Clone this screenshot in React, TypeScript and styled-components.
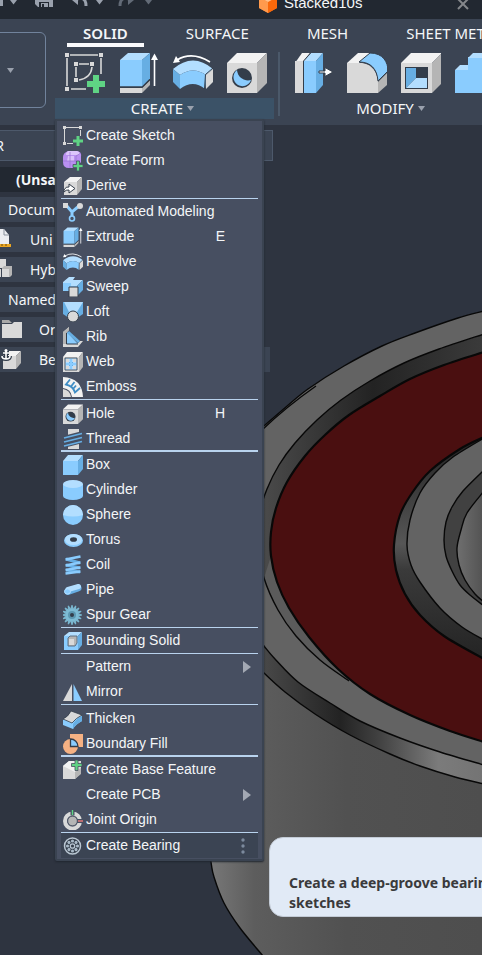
import React from "react";
import styled, { createGlobalStyle } from "styled-components";

const ui = '"Noto Sans", "Open Sans", sans-serif';
const sans = '"Liberation Sans", Arial, sans-serif';

const c = {
  title: "#222831",
  ribbon: "#3b4453",
  canvas: "#2e3440",
  menu: "#474f61",
  edge: "#3a4351",
  line: "#b9d3ee",
  text: "#f4f6f8",
  muted: "#9aa1ad",
  blue: "#8accfe",
  pale: "#b3deff",
  deep: "#67aee3",
  grey: "#d9d9d9",
  white: "#f2f2f2",
  shade: "#b5b5b5",
  ink: "#333d4a",
  green: "#5fd384",
};

const GlobalStyle = createGlobalStyle`
  * { box-sizing: border-box; }
  body { margin: 0; background: ${c.canvas}; }
  button { border: 0; padding: 0; margin: 0; background: none; color: inherit; font: inherit; cursor: pointer; }
  svg { display: block; flex: none; }
`;

const Page = styled.div`
  min-height: 100vh;
  display: flex;
  flex-direction: column;
  overflow: hidden;
  position: relative;
  background: ${c.canvas};
  color: ${c.text};
  font-family: ${ui};
`;

const TitleBar = styled.header`
  height: 19px;
  display: flex;
  align-items: flex-end;
  justify-content: space-between;
  overflow: hidden;
  background: ${c.title};
  padding: 0 13px 6px 0;
`;
const QuickAccess = styled.div`
  flex: 0 0 259px;
  display: flex;
  height: 24px;
`;
const DocTab = styled.div`
  flex: 1;
  display: flex;
  align-items: center;
  gap: 7px;
  height: 21px;
  font: 15px/21px ${sans};
`;
const CloseButton = styled.button`
  height: 18px;
  color: ${c.muted};
`;

const Ribbon = styled.div`
  height: 106px;
  display: flex;
  background: ${c.ribbon};
  position: relative;
  z-index: 2;
`;
const WorkspaceButton = styled.button`
  flex: none;
  width: 66px;
  height: 76px;
  margin: 13px 9px 0 -20px;
  padding: 0 31px 0 0;
  border: 1px solid #71839c;
  border-radius: 6px;
  display: flex;
  align-items: center;
  justify-content: flex-end;
`;
const RibbonMain = styled.div`
  flex: none;
`;
const Tabs = styled.nav`
  height: 28px;
  display: flex;
  gap: 26px;
  padding-left: 12px;
  margin-bottom: 5px;
`;
const Tab = styled.button<{ $active?: boolean }>`
  height: 28px;
  min-width: 72px;
  padding: 4px 16px 0;
  font-size: 15px;
  line-height: 20px;
  font-weight: ${(p) => (p.$active ? 600 : 400)};
  border-bottom: 4px solid ${(p) => (p.$active ? "#fbfbfd" : "transparent")};
  white-space: nowrap;
`;
const Groups = styled.div`
  display: flex;
`;
const Group = styled.section`
  position: relative;
  width: 219px;
`;
const Tools = styled.div`
  display: flex;
  gap: 14px;
  padding: 0 7px 5px 10px;
  height: 46px;
`;
const GroupLabel = styled.button<{ $open?: boolean }>`
  width: 100%;
  height: 21px;
  display: flex;
  align-items: center;
  justify-content: center;
  gap: 4px;
  padding-right: 4px;
  font-size: 15px;
  line-height: 21px;
  background: ${(p) => (p.$open ? "#3b5267" : "transparent")};
`;
const Divider = styled.div`
  width: 2px;
  height: 64px;
  margin: 0 3px 0 4px;
  background: #4b596a;
`;

const Menu = styled.div`
  position: absolute;
  top: 100%;
  left: 0;
  width: 209px;
  padding: 2px 4px 1px;
  background: ${c.menu};
  border: 2px solid ${c.edge};
  border-radius: 2px;
  box-shadow: 0 1px 2px #20262f;
  font: 14px/25px ${sans};
`;
const MenuItem = styled.button<{ $hot?: boolean }>`
  width: 100%;
  height: 25px;
  display: grid;
  grid-template-columns: 20px 1fr 16px 20px;
  column-gap: 3px;
  align-items: center;
  padding: 0 4px 0 2px;
  text-align: left;
  white-space: nowrap;
  background: ${(p) => (p.$hot ? c.ribbon : "transparent")};
`;
const ItemLabel = styled.span`
  grid-column: 2;
`;
const Shortcut = styled.span`
  grid-column: 3;
  justify-self: end;
  margin-right: 6px;
`;
const ItemEnd = styled.span`
  grid-column: 4;
  justify-self: end;
  margin-right: 3px;
`;
const Rule = styled.hr<{ $kind: "thin" | "spaced" | "thick" }>`
  border: 0;
  height: ${(p) => (p.$kind === "thick" ? 2 : 1)}px;
  margin: ${(p) => (p.$kind === "thick" ? "-1px 0 0" : p.$kind === "spaced" ? "0 0 1px" : "0")};
  background: ${c.line};
`;
const HotRow = styled.div`
  position: relative;
`;
const Tooltip = styled.div`
  position: absolute;
  left: calc(100% + 11px);
  top: 4px;
  min-width: 260px;
  height: 80px;
  padding: 35px 19px 0;
  border: 1px solid #c3cbd6;
  border-radius: 14px;
  background: #e1eaf6;
  color: #3a3a3c;
  font: 700 14px/20px ${ui};
  white-space: nowrap;
`;

const Workspace = styled.main`
  flex: 1;
  position: relative;
`;
const Viewport = styled.svg`
  position: absolute;
  inset: 0;
  width: 100%;
  height: 100%;
`;
const Browser = styled.aside`
  position: relative;
  width: 273px;
  padding-top: 5px;
  font-size: 14px;
`;
const BrowserHead = styled.div`
  height: 31px;
  margin-bottom: 6px;
  padding-right: 268px;
  display: flex;
  align-items: center;
  justify-content: flex-end;
  background: ${c.ribbon};
  border: 1px solid #4d596b;
  border-left: 0;
`;
const Tree = styled.ul`
  list-style: none;
  margin: 0;
  padding: 0;
  display: grid;
  row-gap: 5px;
`;
const Node = styled.li<{ $indent: number; $root?: boolean; $wide?: boolean }>`
  height: 25px;
  width: ${(p) => (p.$wide ? 270 : 260)}px;
  display: flex;
  align-items: center;
  position: relative;
  padding-left: ${(p) => p.$indent}px;
  line-height: 25px;
  font-weight: ${(p) => (p.$root ? 700 : 400)};
  background: ${(p) => (p.$root ? c.title : c.ribbon)};
`;
const NodeIcon = styled.span`
  position: absolute;
  left: 0;
  top: 2px;
`;

/* ---------- drawings ---------- */

const Caret = ({ color = c.muted }: { color?: string }) => (
  <svg width="7" height="5" viewBox="0 0 7 5"><path d="M0 0H7L3.5 5Z" fill={color} /></svg>
);

const art: Record<string, React.ReactNode> = {
  sketch: (
    <>
      <path d="M5 3H33M2 6V34M36 6V22M6 37H21M14 12H24M11 15V25M27 15Q26 26 14 28" stroke={c.grey} strokeWidth="1.600" fill="none" />
      <path d="M0 1h4v4h-4zM34 1h4v4h-4zM0 35h4v4h-4zM9 10h4v4h-4zM25 10h4v4h-4zM9 26h4v4h-4z" fill={c.grey} />
      <path d="M28 23h6v6h6v6h-6v6h-6v-6h-6v-6h6z" fill={c.green} />
    </>
  ),
  extrude: (
    <>
      <path d="M1 36H23V41H1Z" fill={c.grey} /><path d="M23 36L31 28V33L23 41Z" fill={c.shade} />
      <path d="M1 8L9 1H31L23 8Z" fill={c.pale} /><path d="M1 8H23V34.500H1Z" fill={c.blue} /><path d="M23 8L31 1V26.500L23 34.500Z" fill={c.deep} />
      <path d="M1 35.200H23.300L31 27.500" stroke={c.ink} strokeWidth="1.300" fill="none" />
      <path d="M35.500 6V34" stroke="#fff" strokeWidth="1.600" /><path d="M32 8L35.500 1.500L39 8Z" fill="#fff" />
    </>
  ),
  revolve: (
    <>
      <path d="M0 17Q20 0 40 17L33 23Q20 14 7 23Z" fill={c.pale} />
      <path d="M0 17L7 23V37L0 30Z" fill={c.deep} /><path d="M7 23Q20 14 33 23L32 37Q20 27 7 37Z" fill={c.blue} />
      <path d="M33 23L40 17V30L33 37Z" fill={c.grey} /><path d="M40 16L32.500 22.500L31.500 37" stroke={c.ink} fill="none" />
      <path d="M37 10Q19 -1 4 8" stroke="#fff" strokeWidth="1.700" fill="none" /><path d="M0 11L3 4L7 10Z" fill="#fff" />
    </>
  ),
  hole: (
    <>
      <path d="M0 11L10 1H40L30 11Z" fill={c.white} /><path d="M0 11H30V41H0Z" fill={c.grey} /><path d="M30 11L40 1V31L30 41Z" fill={c.shade} />
      <circle cx="15" cy="26" r="10" fill={c.ink} /><path d="M10 18A9 9 0 1 0 24 28A11 11 0 0 1 10 18Z" fill={c.blue} />
    </>
  ),
  press: (
    <>
      <path d="M2 11L9 1H17L10 11Z" fill={c.white} /><path d="M2 9H10V41H2Z" fill={c.grey} />
      <path d="M11 9L18 1H30L23 9Z" fill={c.pale} /><path d="M11 9H23V41H11Z" fill={c.blue} /><path d="M23 9L30 1V33L23 41Z" fill={c.deep} />
      <path d="M10.500 41V9L17.500 1" stroke={c.ink} fill="none" />
      <path d="M26 19H32V15.500L40 20L32 24.500V21H26Z" fill="#fff" stroke={c.ink} />
    </>
  ),
  fillet: (
    <>
      <path d="M0 11L11 1H24L12 11Z" fill={c.white} /><path d="M0 11H13C25 11 31 21 31 31V41H0Z" fill={c.grey} />
      <path d="M31 30L41 20V32L31 41Z" fill={c.shade} />
      <path d="M12 10L23 1C36 1 41 10 41 19L31 29C30 17 24 10 12 10Z" fill={c.blue} stroke={c.ink} />
    </>
  ),
  shell: (
    <>
      <path d="M0 11L10 1H41L31 11Z" fill={c.white} /><path d="M0 11H31V41H0Z" fill={c.grey} /><path d="M31 11L41 1V31L31 41Z" fill={c.shade} />
      <path d="M4 15H27V37H4Z" fill={c.ink} /><path d="M5 16H15V26L5 36Z" fill={c.deep} /><path d="M15 26H26V36H5Z" fill={c.pale} />
    </>
  ),
  combine: (
    <>
      <path d="M0 18L5 13H15V18Z" fill={c.pale} /><path d="M0 18H13V5H40V41H0Z" fill={c.blue} /><path d="M13 6L18 1H40V6Z" fill={c.pale} />
    </>
  ),
};

const Big = ({ name }: { name: string }) => (
  <svg width="40" height="41" viewBox="0 0 40 41">{art[name]}</svg>
);

const box = (
  <>
    <path d="M0 6L5 0H20L15 6Z" fill={c.pale} /><path d="M0 6H15V20H0Z" fill={c.blue} /><path d="M15 6L20 0V14L15 20Z" fill={c.deep} />
  </>
);
const greyBox = (
  <>
    <path d="M1 6L7 1H19L14 6Z" fill={c.white} /><path d="M1 6H14V19H1Z" fill={c.grey} /><path d="M14 6L19 1V13L14 19Z" fill={c.shade} />
  </>
);
const half = (name: string) => <g transform="scale(.5 .488)">{art[name]}</g>;
const teeth = Array.from({ length: 16 }, (_, i) => i * 22.5);

const small: Record<string, React.ReactNode> = {
  sketch: (
    <>
      <path d="M3 1.500H16M1.500 3V16M17.500 4V10M4 17.500H10" stroke={c.grey} strokeWidth="1" fill="none" />
      <path d="M0 0h3v3h-3zM16 0h3v3h-3zM0 16h3v3h-3z" fill={c.grey} />
      <path d="M13.500 10h3v3.500h3.500v3h-3.500v3.500h-3v-3.500h-3.500v-3h3.500z" fill={c.green} />
    </>
  ),
  form: (
    <>
      <path d="M5 0H14Q19 1 18 6V11L13 17H6Q0 17 0 11V6Q0 2 5 0Z" fill="#b990f0" />
      <path d="M5 0H14Q18 1 16 4H4Q1 4 5 0Z" fill="#dcc5fb" /><path d="M5 5H11V10H4Z" fill="#d9c0fb" />
      <path d="M0 10H13M7 1V17M13 17V5L18 2" stroke="#9b76d2" strokeWidth=".8" fill="none" />
      <path d="M13.500 10h3v3.500h3.500v3h-3.500v3.500h-3v-3.500h-3.500v-3h3.500z" fill={c.green} stroke={c.menu} strokeWidth=".8" />
    </>
  ),
  derive: (<>{greyBox}<path d="M1 14Q3 10 6 11V8L12 12.500L6 17V14Q3 13.500 1 16Z" fill="#fff" stroke={c.ink} /></>),
  auto: (
    <>
      <path d="M3 3L9 10L16 4M9 10V16" stroke={c.blue} strokeWidth="3" fill="none" />
      <path d="M0 1H5V6H0Z" fill={c.grey} /><circle cx="17" cy="4" r="3" fill={c.grey} /><circle cx="9" cy="16.500" r="2.500" fill={c.menu} stroke={c.blue} strokeWidth="1.600" />
    </>
  ),
  extrude: half("extrude"),
  revolve: half("revolve"),
  hole: half("hole"),
  sweep: (
    <>
      <path d="M0 5L6 0H12L10 3H20L14 9H0Z" fill={c.pale} /><path d="M0 6H8V9H14V14H0Z" fill={c.blue} /><path d="M14 9L20 3V13L15 18Z" fill={c.deep} />
      <path d="M6 10H15V20H6Z" fill={c.grey} stroke={c.ink} />
    </>
  ),
  loft: (
    <>
      <path d="M0 0H20V12L14 16H6L0 12Z" fill={c.deep} /><path d="M1 0H20L14 10H6Z" fill={c.pale} />
      <circle cx="10" cy="14.500" r="5.500" fill={c.grey} stroke={c.ink} />
    </>
  ),
  rib: (
    <>
      <path d="M0 5L6 0V3L3 6V17H14L17 14H20L15 20H0Z" fill={c.grey} /><path d="M0 5L6 0V3L3 6V17H0Z" fill={c.shade} />
      <path d="M4 5L15 17H4Z" fill={c.blue} /><path d="M4 6L6 4L17 14L15 16Z" fill={c.deep} />
      <path d="M3.500 6V17H15" stroke={c.ink} fill="none" />
    </>
  ),
  web: (
    <>
      <path d="M0 5L4 0H20L16 5Z" fill={c.white} /><path d="M0 5H16V20H0Z" fill={c.grey} /><path d="M16 5L20 0V15L16 20Z" fill={c.shade} />
      <path d="M2 6H14V18H2Z" fill={c.pale} stroke={c.ink} strokeWidth=".8" />
      <path d="M3 7h3v3h-3zM10 7h3v3h-3zM3 14h3v3h-3zM10 14h3v3h-3z" fill={c.grey} />
      <path d="M8 7V17M3 12H13" stroke={c.blue} strokeWidth="2" />
      <path d="M6 10h1v1h-1zM9 10h1v1h-1zM6 13h1v1h-1zM9 13h1v1h-1z" fill={c.deep} />
    </>
  ),
  emboss: (
    <>
      <path d="M0 0Q19 1 20 20H9Q8 12 0 11Z" fill={c.white} /><path d="M0 12Q7 13 8 20H0Z" fill={c.grey} />
      <path d="M7 2.500L3 7.500Q10 9 12 15.500L17 11M11.500 5L8 9.500M13 8.500L10.500 11.500" stroke="#3f8dc5" strokeWidth="1.800" fill="none" />
    </>
  ),
  thread: (
    <>
      <path d="M5 0H16V20H5Z" fill={c.grey} />
      <path d="M0 9L20 4M0 13L20 8M0 17L20 12" stroke={c.menu} strokeWidth="4" /><path d="M1 9L19 4.500M1 13L19 8.500M1 17L19 12.500" stroke={c.deep} strokeWidth="1.800" />
    </>
  ),
  box,
  cylinder: (<><path d="M0 4V16A10 4 0 0 0 20 16V4Z" fill={c.blue} /><ellipse cx="10" cy="4" rx="10" ry="4" fill={c.pale} /></>),
  sphere: (<><circle cx="10" cy="10" r="10" fill={c.blue} /><path d="M0 10A10 10 0 0 1 20 10Q10 13 0 10Z" fill={c.pale} /></>),
  torus: (<><ellipse cx="10.500" cy="10.500" rx="9.500" ry="6.500" fill={c.blue} /><ellipse cx="10.500" cy="9.500" rx="8.500" ry="5.500" fill={c.pale} /><ellipse cx="10.500" cy="9.500" rx="3.500" ry="2.300" fill={c.ink} /></>),
  coil: (
    <>
      <path d="M3 4L17 8M3 10L17 13M3 15L17 17" stroke={c.deep} strokeWidth="3" />
      <path d="M2.500 4.500L17.500 1.500M2.500 10.500L17.500 7.500M2.500 15L17.500 12.500M2.500 18.500L17.500 16.500" stroke={c.blue} strokeWidth="2.600" />
    </>
  ),
  pipe: (
    <>
      <path d="M5 11.500L15 8" stroke={c.deep} strokeWidth="7" strokeLinecap="round" /><path d="M5 9.500L15.500 6.500" stroke={c.pale} strokeWidth="5" strokeLinecap="round" />
      <ellipse cx="4.500" cy="11.500" rx="3" ry="2.600" fill={c.blue} stroke={c.pale} />
    </>
  ),
  gear: (
    <>
      {teeth.map((a) => (<path key={a} d="M7.500 3.500L8.500 0H9.500L10.500 3.500Z" fill="#79b6cf" transform={`rotate(${a} 9 10)`} />))}
      <circle cx="9" cy="10" r="7" fill="#7dbbd4" /><circle cx="9" cy="10" r="4" fill="#5c97b0" /><circle cx="9" cy="10" r="2" fill={c.ink} />
    </>
  ),
  bounding: (
    <>
      <path d="M1 5L6 1H19L15 5Z" fill={c.pale} /><path d="M1 5H15V19H1Z" fill={c.blue} /><path d="M15 5L19 1V14L15 19Z" fill={c.deep} />
      <path d="M5 7L7 5H14V12L12 15H5Z" fill={c.shade} stroke="#55677a" strokeWidth=".9" /><path d="M6 8H11V14H6Z" fill={c.grey} />
    </>
  ),
  mirror: (<><path d="M9 2V19H0Z" fill={c.grey} /><path d="M10.500 2V19H19Z" fill={c.blue} /></>),
  thicken: (
    <>
      <path d="M0 11Q5 8 9 3L19 7V12Q13 15 10 20L0 16Z" fill={c.blue} /><path d="M10 15Q14 9 19 7V12Q13 15 10 20Z" fill={c.deep} />
      <path d="M0 10Q5 8 8 2L19 6Q13 9 9 14Z" fill={c.grey} stroke={c.ink} strokeWidth=".8" />
    </>
  ),
  fill: (
    <>
      <path d="M7 0H20V13H7Z" fill="#f5b183" /><circle cx="7.500" cy="12.500" r="7.500" fill="#f5b183" />
      <path d="M7.500 5A7.500 7.500 0 0 1 15 12.500H7.500Z" fill={c.blue} stroke={c.ink} strokeWidth="1.300" />
    </>
  ),
  base: (
    <>
      <path d="M0 6L6 1H18V13L12 19H0Z" fill={c.grey} /><path d="M0 6L6 1H12L12 12Z" fill={c.white} /><path d="M12 12L18 8V14L12 19Z" fill={c.shade} />
      <path d="M12 0h3v3.500h4v3h-4v4h-3v-4h-3.500v-3h3.500z" fill={c.green} stroke={c.menu} strokeWidth=".8" />
    </>
  ),
  joint: (
    <>
      <circle cx="9.500" cy="11" r="7.500" fill="none" stroke={c.grey} strokeWidth="4" />
      <path d="M9.500 0V5.500M14 11H20" stroke={c.menu} strokeWidth="4" />
      <circle cx="9.500" cy="11" r="4.800" fill={c.shade} stroke={c.menu} strokeWidth=".8" />
      <path d="M9.500 0V5" stroke={c.green} strokeWidth="1.400" /><path d="M15 11H20" stroke="#f07c7c" strokeWidth="1.400" />
    </>
  ),
  bearing: (
    <>
      <circle cx="9.500" cy="10" r="8" fill={c.ink} stroke="#b9c6d2" strokeWidth="1.500" /><circle cx="9.500" cy="10" r="2.200" fill={c.ink} stroke="#b9c6d2" strokeWidth="1.300" />
      {teeth.filter((_, i) => i % 2 === 0).map((a) => (<circle key={a} cx="9.500" cy="5" r="1.600" fill="#a9b9c7" transform={`rotate(${a} 9.500 10)`} />))}
    </>
  ),
};

const Small = ({ name }: { name: string }) => (
  <svg width="20" height="20" viewBox="0 0 20 20">{small[name]}</svg>
);

/* Smooth open curve through the points of a profile; `join` continues an earlier path. */
type Pt = [number, number];
const pts = (s: string): Pt[] => s.split(" ").map((p) => p.split(",").map(Number) as Pt);
const curve = (p: Pt[], join = false) => {
  let d = `${join ? "L" : "M"}${p[0][0]} ${p[0][1]}`;
  for (let i = 0; i < p.length - 1; i++) {
    const a = p[i - 1] ?? p[i], b = p[i], e = p[i + 1], f = p[i + 2] ?? e;
    d += `C${b[0] + (e[0] - a[0]) / 6} ${b[1] + (e[1] - a[1]) / 6} ${e[0] - (f[0] - b[0]) / 6} ${e[1] - (f[1] - b[1]) / 6} ${e[0]} ${e[1]}`;
  }
  return d;
};

const edge = { fill: "none", stroke: "#080808", strokeWidth: 1.4 };
const topEdge = pts("484,311 458,318 415,333 382,346 344,366 308,389 286,407 264,426");
const lip = pts("484,334 439,349 404,363 370,381 341,400 317,420 295,443 279,465 267,489 260,512 258,545 264,578 278,610 296,636 320,660 349,681");
const seal = pts("484,352 444,365 410,379 380,396 349,415 325,435 305,456 287,482 276,508 271,532 271,556 277,582 289,608 309,637 338,669 370,694 410,715 450,731 484,742");
const race = pts("484,437 460,449 430,471 412,493 400,515 394,545 396,570 405,594 420,615 444,636 484,659");
const innerFace = pts("484,438 453,457 435,473 420,493 410,520 407,545 411,565 420,582 440,608 462,627 484,640");
const boreLip = pts("484,470 463,491 452,507 446,522 444,540 446,556 452,571 460,585 470,595 484,606");
const bore = pts("484,491 467,513 461,530 457,548 459,565 465,580 475,594 484,602");
const faceLow = pts("250,628 264,646 275,659 298,682 330,703 360,721 400,738 440,752 484,765");
const bevelLow = pts("250,658 264,673 285,692 315,714 350,735 390,754 420,766 455,777 484,784");
const side = pts("205,820 211,862 214,877 224,903 240,928 263,956");
const rev = (p: Pt[]) => [...p].reverse();

const Model = () => (
  <Viewport viewBox="0 125 482 830" preserveAspectRatio="xMinYMin slice" aria-hidden="true">
    <defs>
      <linearGradient id="body" gradientUnits="userSpaceOnUse" x1="211" x2="482" y1="0" y2="0">
        <stop offset="0" stopColor="#777" /><stop offset=".16" stopColor="#5d5d5d" /><stop offset=".5" stopColor="#515151" /><stop offset="1" stopColor="#4e4e4e" />
      </linearGradient>
      <linearGradient id="bevel" gradientUnits="userSpaceOnUse" x1="264" x2="482" y1="0" y2="0">
        <stop offset="0" stopColor="#484848" /><stop offset=".35" stopColor="#232323" /><stop offset=".52" stopColor="#404040" /><stop offset=".8" stopColor="#7b7b7b" /><stop offset="1" stopColor="#747474" />
      </linearGradient>
      <linearGradient id="lip" gradientUnits="userSpaceOnUse" x1="264" x2="482" y1="0" y2="0">
        <stop offset="0" stopColor="#4a4a4a" /><stop offset=".5" stopColor="#232323" /><stop offset="1" stopColor="#3a3a3a" />
      </linearGradient>
      <linearGradient id="race" gradientUnits="userSpaceOnUse" x1="0" x2="0" y1="438" y2="658">
        <stop offset="0" stopColor="#222" /><stop offset=".48" stopColor="#565656" /><stop offset=".6" stopColor="#3a3a3a" /><stop offset="1" stopColor="#242424" />
      </linearGradient>
      <linearGradient id="bore" gradientUnits="userSpaceOnUse" x1="457" x2="482" y1="0" y2="0">
        <stop offset="0" stopColor="#6f6f6f" /><stop offset="1" stopColor="#545454" />
      </linearGradient>
    </defs>
    <path d={curve(topEdge) + "L200 520" + curve(side, true) + "H484Z"} fill="url(#body)" />
    <path d={curve(side)} {...edge} />
    <path d={curve(topEdge) + "L240 470L240 615" + curve(faceLow, true) + "Z"} fill="#636363" />
    <path d={curve(faceLow) + curve(rev(bevelLow), true) + "Z"} fill="url(#bevel)" />
    <path d={curve(lip) + curve(rev(seal.slice(0, 15)), true) + "Z"} fill="url(#lip)" />
    <path d={curve(lip.slice(11)) + curve(rev(seal.slice(10, 15)), true) + "Z"} fill="#5b5b5b" />
    <path d={curve(seal) + curve(rev(race), true) + "Z"} fill="#4a0f10" />
    <path d={curve(race) + "Z"} fill="url(#race)" />
    <path d={curve(innerFace) + "Z"} fill="#636363" />
    <path d={curve(boreLip) + "Z"} fill="#414141" />
    <path d={curve(bore) + "Z"} fill="url(#bore)" />
    <g {...edge}>
      <path d={curve(topEdge)} /><path d="M316 386Q286 407 262 430" /><path d={curve(lip)} />
      <path d={curve(seal)} strokeWidth="2.200" /><path d={curve(faceLow)} /><path d={curve(bevelLow)} />
      <path d={curve(race)} strokeWidth="2.200" /><path d={curve(innerFace)} /><path d={curve(boreLip)} /><path d={curve(bore)} />
    </g>
  </Viewport>
);

const QuickIcons = () => (
  <svg width="160" height="24" viewBox="0 -5 160 24">
    <path d="M0 0H3V12H0Z" fill={c.muted} />
    <path d="M10 6H17L13.500 10.500ZM96 6H103L99.500 10.500Z" fill={c.muted} /><path d="M145 6H152L148.500 10.500Z" fill="#636b77" />
    <path d="M36 -4H53V13H38L35 10V-3Z" fill={c.muted} /><path d="M39 8H49V13H39ZM40 -4H49V3H40Z" fill={c.title} /><path d="M41 9H48V13H41Z" fill={c.muted} /><path d="M42 10H44V13H42Z" fill={c.title} />
    <path d="M86 12Q86 2 77 5" stroke={c.muted} strokeWidth="3" fill="none" /><path d="M72 6L78 0V11Z" fill={c.muted} />
    <path d="M120 12Q120 2 129 5" stroke="#636b77" strokeWidth="3" fill="none" /><path d="M134 6L128 0V11Z" fill="#636b77" />
  </svg>
);

const nodeIcons: Record<string, React.ReactNode> = {
  units: (<><path d="M-6 0H4L9 6V16H-6Z" fill="#eceef2" /><path d="M4 0V6H9" fill="none" stroke="#8a929e" /><path d="M-6 15H11V18H-6Z" fill="#e9a522" /><path d="M-2 15V17M2 15V17M6 15V17" stroke="#6a4a10" /></>),
  hybrid: (<><path d="M-4 0H6V9H-4Z" fill={c.grey} /><path d="M2 9L4 7H12V16L10 18H2Z" fill={c.shade} /><path d="M2 10H9V18H2Z" fill={c.grey} /><path d="M-6 10H1V18H-6Z" fill={c.grey} /></>),
  folder: (<><path d="M2 1H9L12 4H2Z" fill="#a8a8a8" /><path d="M2 5H12L14 3H22V19H2Z" fill={c.grey} /></>),
  anchor: (
    <>
      <g transform="translate(2 1)">{greyBox}</g>
      <path d="M6 1V10M3 4H9M2 7Q2 10 6 10Q10 10 10 7" stroke={c.ink} strokeWidth="4" fill="none" />
      <circle cx="6" cy="1.500" r="1.500" fill="#fff" /><path d="M6 1V10M3 4H9M2 7Q2 10 6 10Q10 10 10 7" stroke="#fff" strokeWidth="1.600" fill="none" />
    </>
  ),
};

/* ---------- data ---------- */

type Item = { icon?: string; label: string; key?: string; sub?: boolean };
const sections: { rule?: "thin" | "spaced" | "thick"; items: Item[] }[] = [
  { items: [{ icon: "sketch", label: "Create Sketch" }, { icon: "form", label: "Create Form" }, { icon: "derive", label: "Derive" }] },
  {
    rule: "thin",
    items: [
      { icon: "auto", label: "Automated Modeling" }, { icon: "extrude", label: "Extrude", key: "E" }, { icon: "revolve", label: "Revolve" },
      { icon: "sweep", label: "Sweep" }, { icon: "loft", label: "Loft" }, { icon: "rib", label: "Rib" }, { icon: "web", label: "Web" }, { icon: "emboss", label: "Emboss" },
    ],
  },
  { rule: "spaced", items: [{ icon: "hole", label: "Hole", key: "H" }, { icon: "thread", label: "Thread" }] },
  {
    rule: "thick",
    items: [
      { icon: "box", label: "Box" }, { icon: "cylinder", label: "Cylinder" }, { icon: "sphere", label: "Sphere" }, { icon: "torus", label: "Torus" },
      { icon: "coil", label: "Coil" }, { icon: "pipe", label: "Pipe" }, { icon: "gear", label: "Spur Gear" },
    ],
  },
  { rule: "thin", items: [{ icon: "bounding", label: "Bounding Solid" }] },
  { rule: "thin", items: [{ label: "Pattern", sub: true }, { icon: "mirror", label: "Mirror" }] },
  { rule: "spaced", items: [{ icon: "thicken", label: "Thicken" }, { icon: "fill", label: "Boundary Fill" }] },
  { rule: "thick", items: [{ icon: "base", label: "Create Base Feature" }, { label: "Create PCB", sub: true }, { icon: "joint", label: "Joint Origin" }] },
];

const nodes = [
  { label: "(Unsa", indent: 16, root: true },
  { label: "Docum", indent: 8 },
  { label: "Uni", indent: 30, icon: "units" },
  { label: "Hyb", indent: 30, icon: "hybrid" },
  { label: "Named", indent: 8 },
  { label: "Or", indent: 39, icon: "folder" },
  { label: "Be", indent: 39, icon: "anchor", wide: true },
];

const CreateMenu = () => (
  <Menu role="menu" aria-label="Create">
    {sections.map((s, i) => (
      <React.Fragment key={i}>
        {s.rule && <Rule $kind={s.rule} />}
        {s.items.map((it) => (
          <MenuItem key={it.label} role="menuitem">
            {it.icon && <Small name={it.icon} />}
            <ItemLabel>{it.label}</ItemLabel>
            {it.key && <Shortcut>{it.key}</Shortcut>}
            {it.sub && (
              <ItemEnd><svg width="8" height="12" viewBox="0 0 8 12"><path d="M0 0L8 6L0 12Z" fill="#a3a8b3" /></svg></ItemEnd>
            )}
          </MenuItem>
        ))}
      </React.Fragment>
    ))}
    <Rule $kind="thin" />
    <HotRow>
      <MenuItem role="menuitem" $hot aria-describedby="bearing-tip">
        <Small name="bearing" />
        <ItemLabel>Create Bearing</ItemLabel>
        <ItemEnd>
          <svg width="16" height="18" viewBox="0 0 16 18"><g fill="#7c8a9d"><circle cx="8" cy="3" r="1.700" /><circle cx="8" cy="9" r="1.700" /><circle cx="8" cy="15" r="1.700" /></g></svg>
        </ItemEnd>
      </MenuItem>
      <Tooltip id="bearing-tip" role="tooltip">Create a deep-groove bearing<br />sketches</Tooltip>
    </HotRow>
  </Menu>
);

const ToolRow = ({ names }: { names: string[] }) => (
  <Tools>
    {names.map((n) => (<button key={n} aria-label={n}><Big name={n} /></button>))}
  </Tools>
);

export default function App() {
  return (
    <Page>
      <GlobalStyle />
      <TitleBar>
        <QuickAccess><QuickIcons /></QuickAccess>
        <DocTab>
          <svg width="18" height="21" viewBox="0 0 18 21"><path d="M9 0L18 5V16L9 21L0 16V5Z" fill="#f47a20" /><path d="M9 10L18 5V16L9 21Z" fill="#f9680b" /><path d="M0 5L9 10V21L0 16Z" fill="#ff9a4d" /><path d="M9 0L18 5L9 10L0 5Z" fill="#ffc08c" /></svg>
          Stacked10s
        </DocTab>
        <CloseButton aria-label="Close">
          <svg width="12" height="12" viewBox="0 0 12 12"><path d="M1 1L11 11M11 1L1 11" stroke="#85878b" strokeWidth="2" /></svg>
        </CloseButton>
      </TitleBar>
      <Ribbon>
        <WorkspaceButton aria-label="Workspace"><Caret /></WorkspaceButton>
        <RibbonMain>
          <Tabs>
            <Tab $active>SOLID</Tab>
            <Tab>SURFACE</Tab>
            <Tab>MESH</Tab>
            <Tab>SHEET METAL</Tab>
          </Tabs>
          <Groups>
            <Group>
              <ToolRow names={["sketch", "extrude", "revolve", "hole"]} />
              <GroupLabel $open aria-expanded="true">CREATE<Caret /></GroupLabel>
              <CreateMenu />
            </Group>
            <Divider />
            <Group>
              <ToolRow names={["press", "fillet", "shell", "combine"]} />
              <GroupLabel>MODIFY<Caret /></GroupLabel>
            </Group>
          </Groups>
        </RibbonMain>
      </Ribbon>
      <Workspace>
        <Model />
        <Browser>
          <BrowserHead>BROWSER</BrowserHead>
          <Tree>
            {nodes.map((n) => (
              <Node key={n.label} $indent={n.indent} $root={n.root} $wide={n.wide}>
                {n.icon && (
                  <NodeIcon><svg width="24" height="21" viewBox="0 0 24 21">{nodeIcons[n.icon]}</svg></NodeIcon>
                )}
                {n.label}
              </Node>
            ))}
          </Tree>
        </Browser>
      </Workspace>
    </Page>
  );
}
